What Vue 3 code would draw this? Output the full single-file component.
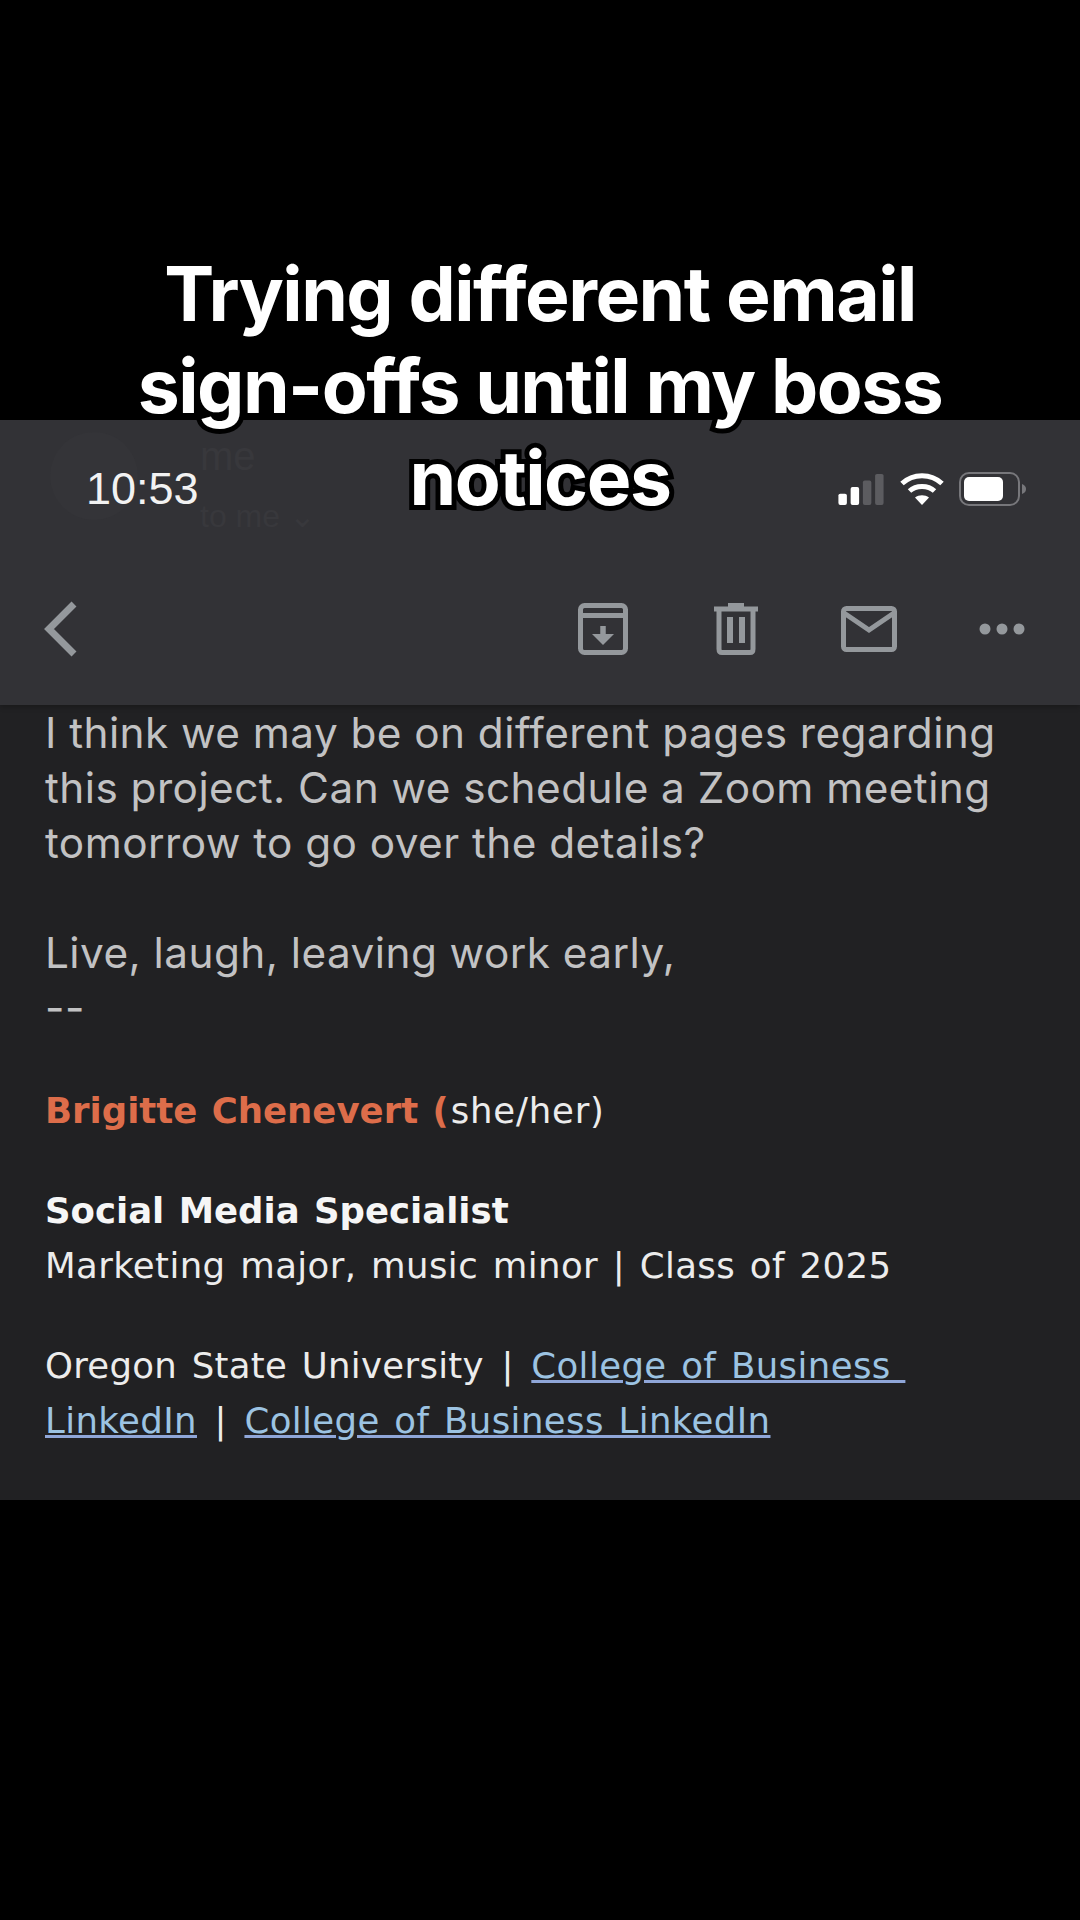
<script setup>
const icons = ['archive', 'trash', 'mail', 'more']
</script>

<template>
  <div class="page">
    <div class="top-space"></div>
    <section class="screen">
      <header class="bar">
        <div class="ghost-avatar"></div>
        <div class="ghost-sender">
          <span class="ghost-me">me</span>
          <span class="ghost-meta">to me ⌄</span>
        </div>
        <div class="status">
          <span class="clock">10:53</span>
          <div class="status-icons">
            <svg width="48" height="32" viewBox="0 0 48 34">
              <rect x="0" y="22" width="9" height="12" rx="2" fill="#fff" />
              <rect x="13" y="15" width="9" height="19" rx="2" fill="#fff" />
              <rect x="26" y="8" width="9" height="26" rx="2" fill="#5c5c60" />
              <rect x="39" y="1" width="9" height="33" rx="2" fill="#5c5c60" />
            </svg>
            <svg width="44" height="34" viewBox="0 0 44 34" fill="none" stroke="#fff" stroke-width="5">
              <path d="M2 11.5 C13 1 31 1 42 11.5" />
              <path d="M9.5 19 C16 13 28 13 34.5 19" />
              <path d="M22 33 L15 25.5 C19 22.5 25 22.5 29 25.5 Z" fill="#fff" stroke="none" />
            </svg>
            <svg class="battery" width="68" height="34" viewBox="0 0 68 34">
              <rect x="1" y="1" width="59" height="32" rx="9" fill="none" stroke="#77777b" stroke-width="2" />
              <rect x="5" y="5" width="39" height="24" rx="5" fill="#fff" />
              <path d="M63 12 C66 13 67 15 67 17 C67 19 66 21 63 22 Z" fill="#77777b" />
            </svg>
          </div>
        </div>
        <div class="toolbar">
          <svg class="back" width="34" height="56" viewBox="0 0 34 56" fill="none" stroke="#94989c" stroke-width="7">
            <path d="M31 3 L6 28 L31 53" />
          </svg>
          <div class="actions">
            <span v-for="icon in icons" :key="icon" class="action">
              <svg v-if="icon === 'archive'" width="50" height="52" viewBox="0 0 50 52" fill="none" stroke="#94989c" stroke-width="5">
                <rect x="2.5" y="2.5" width="45" height="47" rx="4" />
                <path d="M2.5 12.5 H47.5" />
                <path d="M25 23 V37" stroke-width="5.5" />
                <path d="M14 31 H36 L25 42 Z" fill="#94989c" stroke="none" />
              </svg>
              <svg v-else-if="icon === 'trash'" width="44" height="52" viewBox="0 0 44 52" fill="none" stroke="#94989c" stroke-width="5">
                <path d="M5 8 V46 C5 48 6 49.500 8 49.500 H36 C38 49.500 39 48 39 46 V8" />
                <path d="M0 6 H44" />
                <path d="M14 0 H30 V4 H14 Z" fill="#94989c" stroke="none" />
                <path d="M16 14 V40 M28 14 V40" stroke-width="6" />
              </svg>
              <svg v-else-if="icon === 'mail'" width="56" height="46" viewBox="0 0 56 46" fill="none" stroke="#94989c" stroke-width="5">
                <rect x="2.500" y="2.500" width="51" height="41" rx="3" />
                <path d="M3 7 L28 24 L53 7" />
              </svg>
              <svg v-else width="46" height="14" viewBox="0 0 46 14" fill="#94989c">
                <circle cx="6" cy="7" r="5.500" />
                <circle cx="23" cy="7" r="5.500" />
                <circle cx="40" cy="7" r="5.500" />
              </svg>
            </span>
          </div>
        </div>
      </header>

      <article class="mail">
        <p class="message">I think we may be on different pages regarding<br />this project. Can we schedule a Zoom meeting<br />tomorrow to go over the details?</p>
        <p class="message closing">Live, laugh, leaving work early,<br />--</p>
        <p class="name"><strong>Brigitte Chenevert (</strong><span>she/her)</span></p>
        <p class="role"><strong>Social Media Specialist</strong><br />Marketing major, music minor | Class of 2025</p>
        <p class="links">Oregon State University <span class="sep">|</span> <a>College of Business&nbsp;</a><br /><a>LinkedIn</a> <span class="sep">|</span> <a>College of Business LinkedIn</a></p>
      </article>
    </section>
    <h1 class="caption">Trying different email<br />sign-offs until my boss<br />notices</h1>
  </div>
</template>

<style>
html, body { margin: 0; background: #000; }
</style>

<style scoped>
.page {
  position: relative;
  width: 1080px;
  height: 1920px;
  background: #000;
  overflow: hidden;
  display: flex;
  flex-direction: column;
}
.top-space { height: 420px; flex: none; }
.screen { height: 1080px; flex: none; display: flex; flex-direction: column; }
.bar {
  position: relative;
  z-index: 1;
  height: 285px;
  flex: none;
  background: #323236;
  box-shadow: 0 2px 5px rgba(0, 0, 0, 0.25);
  display: flex;
  flex-direction: column;
  box-sizing: border-box;
  padding: 44px 12px 0 45px;
}
.ghost-avatar {
  position: absolute;
  left: 50px;
  top: 12px;
  width: 88px;
  height: 88px;
  border-radius: 50%;
  background: #343438;
}
.ghost-sender {
  position: absolute;
  left: 200px;
  top: 14px;
  color: #38383c;
  font: 400 40px "Liberation Sans", sans-serif;
  display: flex;
  flex-direction: column;
  gap: 18px;
}
.ghost-meta { font-size: 32px; }
.status {
  position: relative;
  display: flex;
  justify-content: space-between;
  align-items: center;
  padding: 0 41px 0 41px;
  height: 50px;
}
.clock {
  color: #f2f2f2;
  font: 400 45px "Liberation Sans", sans-serif;
}
.status-icons { display: flex; align-items: center; gap: 15px; }
.toolbar {
  display: flex;
  justify-content: space-between;
  align-items: center;
  margin-top: 87px;
}
.back { margin-left: -2px; }
.actions { display: flex; align-items: center; }
.action {
  width: 133px;
  display: flex;
  justify-content: center;
}
.mail {
  flex: 1;
  background: #212123;
  padding: 0 45px 0;
  font-family: "DejaVu Sans", sans-serif;
  color: #fff;
}
p { margin: 0; }
.message {
  font-family: Inter, "Liberation Sans", sans-serif;
  font-size: 42.3px;
  letter-spacing: 0.45px;
  line-height: 55px;
  color: #c2c2c3;
}
.closing { margin-top: 55px; }
.name, .role, .links {
  font-size: 35.5px;
  letter-spacing: 0.4px;
  word-spacing: 3px;
  line-height: 55px;
  margin-top: 45px;
  color: #ececec;
}
.name { margin-top: 48px; }
.name span { letter-spacing: 0.8px; margin-left: 2px; }
strong { letter-spacing: 0; word-spacing: 2px; }
.name strong { color: #dd6d4a; }
.role strong { color: #f6f6f6; }
.links { letter-spacing: 0.3px; }
.sep { margin: 0 3px; }
.links a {
  color: #9cc3e2;
  letter-spacing: 0.4px;
  text-decoration: underline;
  text-decoration-color: #8fa6d8;
  text-decoration-thickness: 2.5px;
}
.caption {
  position: absolute;
  z-index: 2;
  left: 0;
  right: 0;
  top: 248px;
  margin: 0;
  text-align: center;
  color: #fff;
  font: 700 75px/92px Inter, "Liberation Sans", sans-serif;
  font-variant-ligatures: none;
  letter-spacing: -1.5px;
  paint-order: stroke fill;
  -webkit-text-stroke: 10px #000;
}
</style>
